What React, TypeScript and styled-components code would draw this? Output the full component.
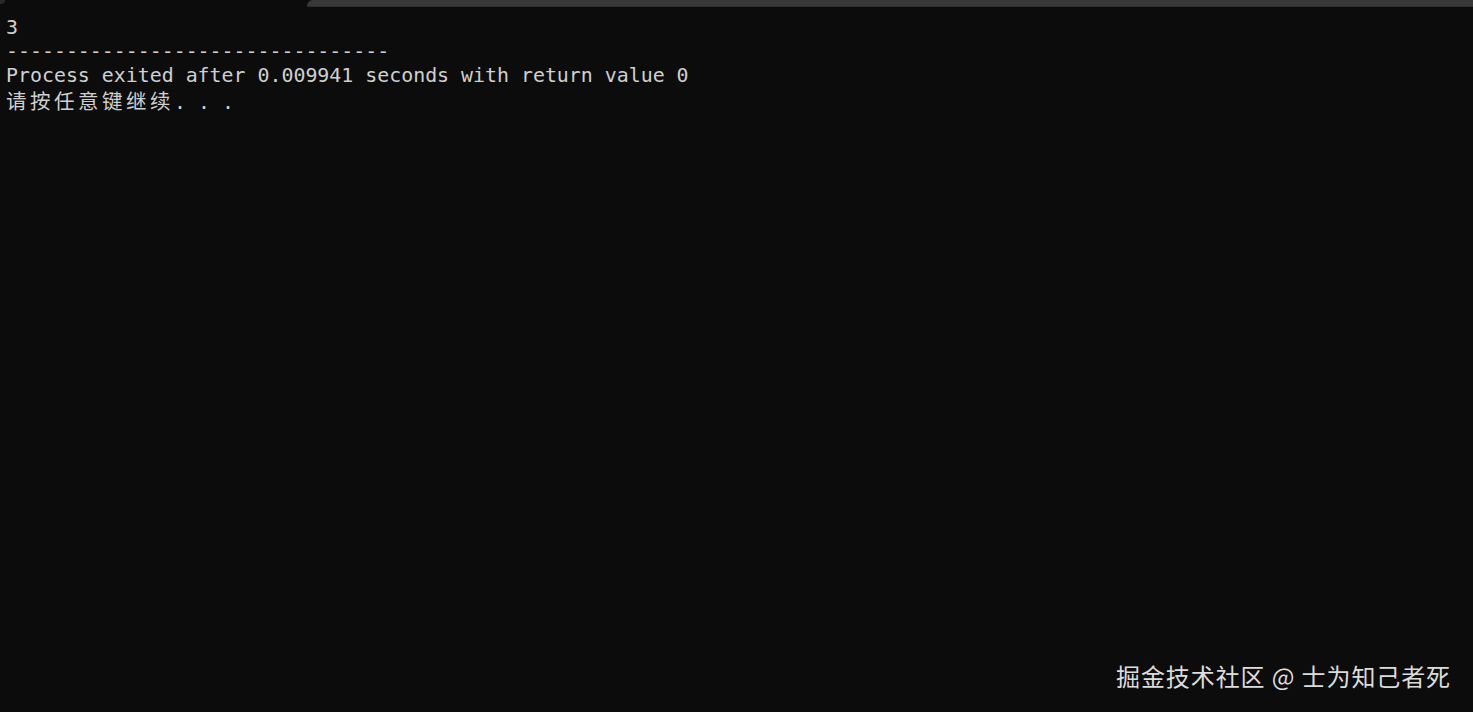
import React from "react";
import styled, { createGlobalStyle } from "styled-components";

const Global = createGlobalStyle`
  html, body { margin: 0; padding: 0; background: #0c0c0c; }
  #root { width: 1473px; height: 712px; }
`;

const Window = styled.div`
  position: relative;
  width: 1473px;
  height: 712px;
  background: #0c0c0c;
  overflow: hidden;
  display: flex;
  flex-direction: column;
`;

const TopStrip = styled.div`
  display: flex;
  height: 7px;
  flex: none;
`;

const StripLeft = styled.div`
  width: 307px;
  background: #0c0c0c;
`;

const CornerNub = styled.div`
  width: 5px;
  height: 4px;
  background: #2a2a2a;
  border-bottom-right-radius: 4px;
`;

const StripRight = styled.div`
  flex: 1;
  background: #383838;
  border-bottom: 1px solid #2c2c2c;
  border-top-left-radius: 6px;
  box-sizing: border-box;
`;

const Console = styled.pre`
  margin: 0;
  padding: 9px 0 0 6px;
  font-family: "DejaVu Sans Mono", "Noto Sans CJK SC", monospace;
  font-size: 19.9px;
  line-height: 24px;
  color: #d0d0d0;
  white-space: pre;
`;

const Line = styled.div`
  height: 24px;
`;

const Cjk = styled.span`
  font-family: "Noto Sans CJK SC", sans-serif;
  font-size: 20.5px;
  letter-spacing: 3.5px;
`;

const Watermark = styled.div`
  position: absolute;
  right: 22px;
  bottom: 21px;
  font-family: "Noto Sans CJK SC", "Noto Sans", sans-serif;
  font-size: 24px;
  line-height: 30px;
  color: #dcdcdc;
  letter-spacing: 0.9px;
`;

export default function App() {
  return (
    <>
      <Global />
      <Window>
        <TopStrip>
          <StripLeft>
            <CornerNub />
          </StripLeft>
          <StripRight />
        </TopStrip>
        <Console>
          <Line>3</Line>
          <Line>--------------------------------</Line>
          <Line>Process exited after 0.009941 seconds with return value 0</Line>
          <Line>
            <Cjk>请按任意键继续</Cjk>. . .
          </Line>
        </Console>
        <Watermark>掘金技术社区 @ 士为知己者死</Watermark>
      </Window>
    </>
  );
}
